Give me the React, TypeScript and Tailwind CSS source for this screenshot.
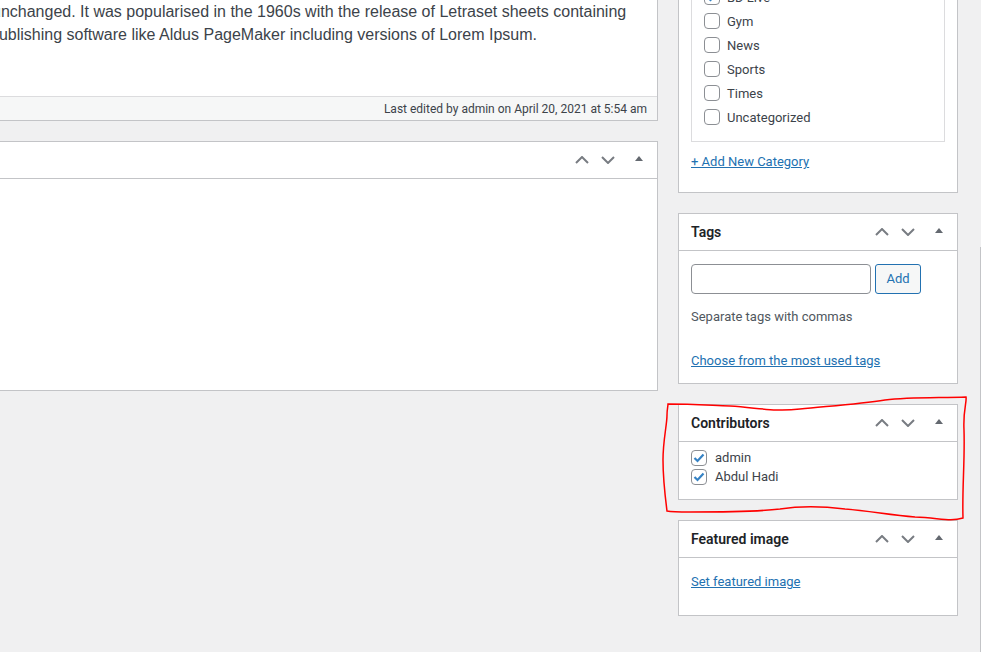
import type { ReactNode } from "react";

const ui = { fontFamily: "Roboto, 'Noto Sans', sans-serif" };

function Chevron({ down }: { down?: boolean }) {
  return (
    <svg width="14" height="8" viewBox="0 0 14 8" className="block">
      <polyline
        points={down ? "1,1 7,7 13,1" : "1,7 7,1 13,7"}
        fill="none"
        stroke="#787c82"
        strokeWidth="2"
      />
    </svg>
  );
}

function HeaderTools() {
  return (
    <div className="flex h-full items-center">
      <button className="flex h-full w-[26px] items-center justify-center">
        <Chevron />
      </button>
      <button className="flex h-full w-[26px] items-center justify-center">
        <Chevron down />
      </button>
      <button className="flex h-full w-[36px] items-center justify-center pb-[3px]">
        <svg width="8" height="5" viewBox="0 0 8 5" className="block">
          <polygon points="0,5 4,0 8,5" fill="#646970" />
        </svg>
      </button>
    </div>
  );
}

function Box({ title, children }: { title: string; children: ReactNode }) {
  return (
    <div className="border border-[#c3c4c7] bg-white">
      <div className="flex h-[37px] items-center justify-between border-b border-[#c3c4c7] pl-[12px]">
        <h2 className="pt-px text-[14px] font-semibold text-[#1d2327]">{title}</h2>
        <HeaderTools />
      </div>
      {children}
    </div>
  );
}

function Check({ checked, label, gap = "gap-[7px]" }: { checked?: boolean; label: string; gap?: string }) {
  return (
    <label className={`flex items-center ${gap} text-[13px] text-[#3c434a]`}>
      <span className="flex h-[16px] w-[16px] items-center justify-center rounded-[4px] border border-[#8c8f94] bg-white">
        {checked && (
          <svg width="12" height="10" viewBox="0 0 12 10">
            <polyline points="1.5,5 4.5,8 10.5,1.5" fill="none" stroke="#3582c4" strokeWidth="2.2" />
          </svg>
        )}
      </span>
      <span className="pt-px">{label}</span>
    </label>
  );
}

const categories = ["BD Live", "Gym", "News", "Sports", "Times", "Uncategorized"];

export default function App() {
  return (
    <div className="relative h-[652px] w-[981px] overflow-hidden bg-[#f0f0f1]" style={ui}>
      <div className="flex gap-[20px]">
        {/* main column */}
        <div className="-ml-[20px] flex w-[678px] flex-col gap-[20px]">
          <div className="-mt-px border border-[#c3c4c7] bg-white">
            <div
              className="h-[96px] overflow-hidden text-[16px] leading-[23px] text-[#3c434a]"
              style={{ fontFamily: "'Liberation Sans', Arial, sans-serif" }}
            >
              <div className="ml-[11px] whitespace-nowrap">
                unchanged. It was popularised in the 1960s with the release of Letraset sheets containing
              </div>
              <div className="ml-[9px] whitespace-nowrap">
                publishing software like Aldus PageMaker including versions of Lorem Ipsum.
              </div>
            </div>
            <div className="flex h-[24px] items-center justify-end border-t border-[#dcdcde] bg-[#f6f7f7] pr-[10px] pt-px text-[12px] text-[#3c434a]">
              Last edited by admin on April 20, 2021 at 5:54 am
            </div>
          </div>

          <div className="border border-[#c3c4c7] bg-white">
            <div className="flex h-[37px] items-center justify-end border-b border-[#c3c4c7]">
              <HeaderTools />
            </div>
            <div className="h-[211px]" />
          </div>
        </div>

        {/* sidebar */}
        <div className="flex w-[280px] flex-col gap-[20px]">
          <div className="-mt-[40px] border border-[#c3c4c7] bg-white px-[12px]">
            <div className="mt-[4px] border border-[#dcdcde] pb-[12px] pl-[12px] pt-[19px]">
              {categories.map((c, i) => (
                <div key={c} className="flex h-[24px] items-center">
                  <Check checked={i === 0} label={c} />
                </div>
              ))}
            </div>
            <div className="mt-[10px] pb-[20px] text-[13px] leading-[20px]">
              <a className="text-[#2271b1] underline">+ Add New Category</a>
            </div>
          </div>

          <Box title="Tags">
            <div className="px-[12px] pb-[12px] pt-[13px] text-[13px] leading-[20px]">
              <div className="flex gap-[4px]">
                <input className="h-[30px] w-[180px] rounded-[4px] border border-[#8c8f94] bg-white" />
                <button className="h-[30px] w-[46px] rounded-[3px] border border-[#2271b1] bg-[#f6f7f7] text-[13px] text-[#2271b1]">
                  Add
                </button>
              </div>
              <p className="mt-[13px] text-[#50575e]">Separate tags with commas</p>
              <p className="mt-[24px]">
                <a className="text-[#2271b1] underline">Choose from the most used tags</a>
              </p>
            </div>
          </Box>

          <Box title="Contributors">
            <div className="px-[12px] pb-[13px] pt-[6px]">
              <div className="flex h-[19px] items-center">
                <Check checked label="admin" gap="gap-[8px]" />
              </div>
              <div className="flex h-[19px] items-center">
                <Check checked label="Abdul Hadi" gap="gap-[8px]" />
              </div>
            </div>
          </Box>

          <Box title="Featured image">
            <div className="h-[57px] px-[12px] pt-[14px] text-[13px] leading-[20px]">
              <a className="text-[#2271b1] underline">Set featured image</a>
            </div>
          </Box>
        </div>
      </div>

      <div className="absolute bottom-0 left-[980px] top-[247px] w-px bg-[#c3c4c7]" />

      {/* hand-drawn highlight */}
      <svg className="pointer-events-none absolute left-0 top-0" width="981" height="652">
        <path
          d="M668 404 C690 404 705 405 730 406 C760 408 775 412 800 409 C830 406 860 404 885 400 C910 397 940 398 966 397 C967 402 963 410 964 430 C965 460 962 490 963 518 C950 522 940 518 915 517 C890 515 870 511 845 509 C820 506 800 506 780 509 C755 512 720 512 690 512 C680 512 672 512 667 511 C665 495 663 480 663 460 C663 440 667 425 667 415 C667 410 668 406 668 404 Z"
          fill="none"
          stroke="#ff0000"
          strokeWidth="1.5"
        />
      </svg>
    </div>
  );
}
